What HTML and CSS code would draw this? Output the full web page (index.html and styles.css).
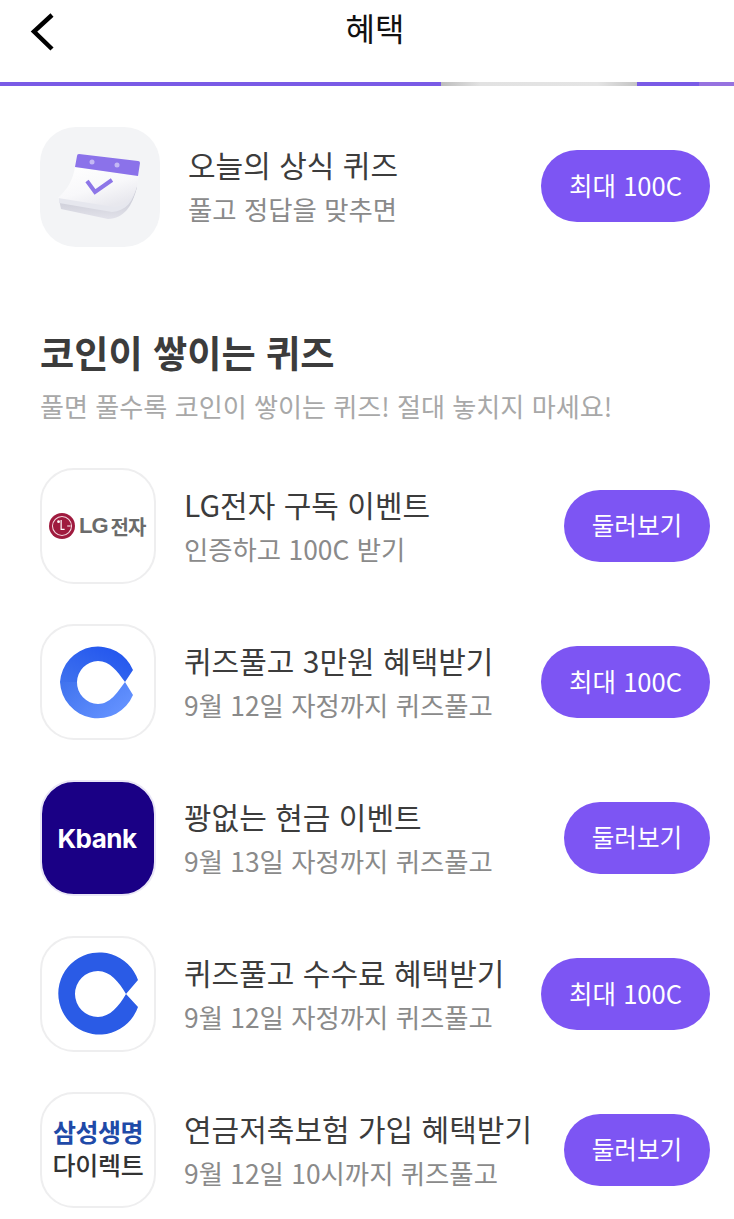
FILE: index.html
```html
<!DOCTYPE html>
<html lang="ko">
<head>
  <meta charset="UTF-8" />
  <title>혜택</title>
  <link rel="stylesheet" href="styles.css">
</head>
<body>
  <header class="topbar">
    <svg class="back" width="26" height="40" viewBox="0 0 26 40"><path d="M22 3 L4 19.5 L22 37" fill="none" stroke="#000" stroke-width="4.5"/></svg>
    <h1 class="page-title">혜택</h1>
  </header>
  <div class="progress">
    <div class="seg-a"></div>
    <div class="seg-b"></div>
    <div class="seg-c"></div>
    <div class="seg-d"></div>
  </div>

  <section class="today row">
    <div class="icon icon-big">
      <svg width="120" height="120" viewBox="0 0 120 120">
        <defs>
          <linearGradient id="page" x1="0" y1="0" x2="0.6" y2="1">
            <stop offset="0" stop-color="#fff"/>
            <stop offset="0.6" stop-color="#f8f8fa"/>
            <stop offset="1" stop-color="#e8e8ee"/>
          </linearGradient>
          <linearGradient id="stack" x1="0" y1="0" x2="0" y2="1">
            <stop offset="0" stop-color="#bfc0cc"/>
            <stop offset="1" stop-color="#e2e2ea"/>
          </linearGradient>
        </defs>
        <path d="M19 72 L21 82 L68 92 C84 91 92 80 97 60 Z" fill="url(#stack)"/>
        <path d="M19 70 L19 76 L72 85 C86 84 94 74 97 58 Z" fill="#e6e7ee"/>
        <path d="M35 40 L99 49 C97 66 90 79 74 80 L18 71 C28 62 33 52 35 40 Z" fill="url(#page)"/>
        <path d="M37 29 Q37 27 39 27 L98 34 Q100 34 100 36 L98 49 L35 40 Z" fill="#8b72ea"/>
        <circle cx="52" cy="35" r="2.5" fill="#c4b8f4"/>
        <circle cx="77" cy="38" r="2.5" fill="#c4b8f4"/>
        <path d="M47 54 L55 65 L72 53" fill="none" stroke="#8d76e8" stroke-width="4"/>
      </svg>
    </div>
    <div class="text text-big">
      <div class="title">오늘의 상식 퀴즈</div>
      <div class="sub">풀고 정답을 맞추면</div>
    </div>
    <button class="pill pill-raised">최대 100C</button>
  </section>

  <section class="intro">
    <h2>코인이 쌓이는 퀴즈</h2>
    <p>풀면 풀수록 코인이 쌓이는 퀴즈! 절대 놓치지 마세요!</p>
  </section>

  <section class="list">
    <div class="row">
      <div class="icon icon-line lg">
        <svg width="26" height="26" viewBox="0 0 30 30">
          <circle cx="15" cy="15" r="15" fill="#9f1a3e"/>
          <circle cx="15" cy="15" r="11" fill="none" stroke="#f3d9e0" stroke-width="1.2"/>
          <circle cx="11" cy="10" r="1.6" fill="#fff"/>
          <path d="M14 8 V19 H18 M21 15 H25" fill="none" stroke="#fff" stroke-width="1.4"/>
        </svg>
        <span class="lg-mark">LG</span>
        <span class="lg-text">전자</span>
      </div>
      <div class="text">
        <div class="title">LG전자 구독 이벤트</div>
        <div class="sub">인증하고 100C 받기</div>
      </div>
      <button class="pill pill-small">둘러보기</button>
    </div>

    <div class="row">
      <div class="icon icon-line">
        <svg width="116" height="116" viewBox="0 0 116 116">
          <defs>
            <linearGradient id="ctop" x1="0" y1="1" x2="1" y2="0">
              <stop offset="0" stop-color="#3f72ee"/>
              <stop offset="1" stop-color="#1f52ee"/>
            </linearGradient>
            <linearGradient id="cbottom" x1="0" y1="0" x2="1" y2="0.6">
              <stop offset="0" stop-color="#3f72ee"/>
              <stop offset="1" stop-color="#6492ff"/>
            </linearGradient>
          </defs>
          <path d="M93 46 A38 38 0 0 0 20 58 L37 58 A21.5 21.5 0 0 1 58 37 C70 37 77 47 85 58 Z" fill="url(#ctop)"/>
          <path d="M93 71 A38 38 0 0 1 20 58 L37 58 A21.5 21.5 0 0 0 58 80 C70 80 77 69 85 58 Z" fill="url(#cbottom)"/>
        </svg>
      </div>
      <div class="text">
        <div class="title">퀴즈풀고 3만원 혜택받기</div>
        <div class="sub">9월 12일 자정까지 퀴즈풀고</div>
      </div>
      <button class="pill">최대 100C</button>
    </div>

    <div class="row">
      <div class="icon kbank">Kbank</div>
      <div class="text">
        <div class="title">꽝없는 현금 이벤트</div>
        <div class="sub">9월 13일 자정까지 퀴즈풀고</div>
      </div>
      <button class="pill pill-small">둘러보기</button>
    </div>

    <div class="row">
      <div class="icon icon-line">
        <svg width="116" height="116" viewBox="0 0 116 116">
          <path d="M98 44 A41 41 0 1 0 98 71 L86 58 C79 70 70 81 58 81 A23 23 0 0 1 58 35 C70 35 79 46 86 58 Z" fill="#2a5be6"/>
        </svg>
      </div>
      <div class="text">
        <div class="title">퀴즈풀고 수수료 혜택받기</div>
        <div class="sub">9월 12일 자정까지 퀴즈풀고</div>
      </div>
      <button class="pill">최대 100C</button>
    </div>

    <div class="row">
      <div class="icon icon-line samsung">
        <span class="samsung-top">삼성생명</span>
        <span class="samsung-bottom">다이렉트</span>
      </div>
      <div class="text">
        <div class="title">연금저축보험 가입 혜택받기</div>
        <div class="sub">9월 12일 10시까지 퀴즈풀고</div>
      </div>
      <button class="pill pill-small">둘러보기</button>
    </div>
  </section>
</body>
</html>
```

FILE: styles.css
```css
* {
  box-sizing: border-box;
}

body {
  margin: 0;
  background: #fff;
  color: #3c3c3c;
  font-family: "Noto Sans CJK KR", "Noto Sans", sans-serif;
  overflow: hidden;
}

.topbar {
  height: 82px;
  display: flex;
  align-items: flex-start;
  justify-content: center;
  padding-left: 16px;
  position: relative;
}

.back {
  position: absolute;
  left: 30px;
  top: 12px;
}

.page-title {
  margin: 4px 0 0;
  font-size: 32px;
  line-height: 46px;
  font-weight: 400;
  color: #111;
}

.progress {
  height: 4px;
  display: flex;
}

.seg-a {
  width: 441px;
  background: #7a5be6;
}

.seg-b {
  width: 196px;
  background: linear-gradient(90deg, #bdbdbd, #e2e2e2 20%, #e4e4e4 80%, #c4c4c4);
}

.seg-c {
  width: 62px;
  background: #7a5be6;
}

.seg-d {
  flex: 1;
  background: #9672e0;
}

.row {
  display: flex;
  align-items: center;
  padding: 0 24px 0 40px;
}

.today {
  margin-top: 41px;
}

.icon {
  width: 116px;
  height: 116px;
  flex: none;
  border-radius: 34px;
  overflow: hidden;
}

.icon-big {
  width: 120px;
  height: 120px;
  background: #f3f4f6;
  border-radius: 36px;
}

.icon-line {
  border: 2px solid #eeeeef;
}

.icon-line svg {
  display: block;
  margin: -2px;
}

.lg {
  display: flex;
  align-items: center;
  padding-left: 7px;
}

.lg svg {
  margin: 0 4px 0 0;
  flex: none;
}

.lg-mark {
  font-family: "Liberation Sans", sans-serif;
  font-size: 22px;
  font-weight: 700;
  color: #6b6b6b;
  letter-spacing: -1px;
  margin-right: 3px;
}

.lg-text {
  font-size: 20px;
  font-weight: 700;
  color: #6b6b6b;
  letter-spacing: -1px;
  white-space: nowrap;
}

.kbank {
  background: #1a0085;
  border: 2px solid #e9e6f6;
  color: #fff;
  font-family: Inter, sans-serif;
  font-size: 26px;
  font-weight: 700;
  letter-spacing: -0.5px;
  padding-right: 2px;
  display: flex;
  align-items: center;
  justify-content: center;
}

.samsung {
  display: flex;
  flex-direction: column;
  align-items: center;
  justify-content: center;
  padding-bottom: 4px;
}

.samsung-top {
  font-size: 25px;
  line-height: 33px;
  font-weight: 700;
  color: #1f4aa8;
  letter-spacing: -0.5px;
}

.samsung-bottom {
  font-size: 25px;
  line-height: 33px;
  font-weight: 500;
  color: #333;
  letter-spacing: -0.3px;
}

.text {
  flex: 1;
  min-width: 0;
  margin-left: 28px;
  margin-bottom: 2px;
}

.text-big {
  margin-bottom: 3px;
}

.title {
  font-size: 30px;
  line-height: 42px;
  color: #3c3c3c;
  white-space: nowrap;
}

.sub {
  margin-top: 5px;
  font-size: 26.4px;
  line-height: 38px;
  color: #8a8a8a;
  white-space: nowrap;
}

.pill {
  flex: none;
  width: 169px;
  height: 72px;
  border: none;
  border-radius: 36px;
  background: #7d55f3;
  color: #fff;
  font-family: inherit;
  font-size: 25.6px;
  padding: 0 0 4px;
}

.pill-small {
  width: 146px;
  font-size: 24.6px;
}

.pill-raised {
  margin-bottom: 2px;
}

.intro {
  margin-top: 78px;
  padding: 0 40px;
}

.intro h2 {
  margin: 0;
  font-size: 37.2px;
  line-height: 54px;
  font-weight: 700;
  color: #3c3c3c;
}

.intro p {
  margin: 8px 0 0;
  font-size: 26.1px;
  line-height: 38px;
  color: #a8a8a8;
  white-space: nowrap;
}

.list {
  margin-top: 43px;
  display: flex;
  flex-direction: column;
  gap: 40px;
}
```
